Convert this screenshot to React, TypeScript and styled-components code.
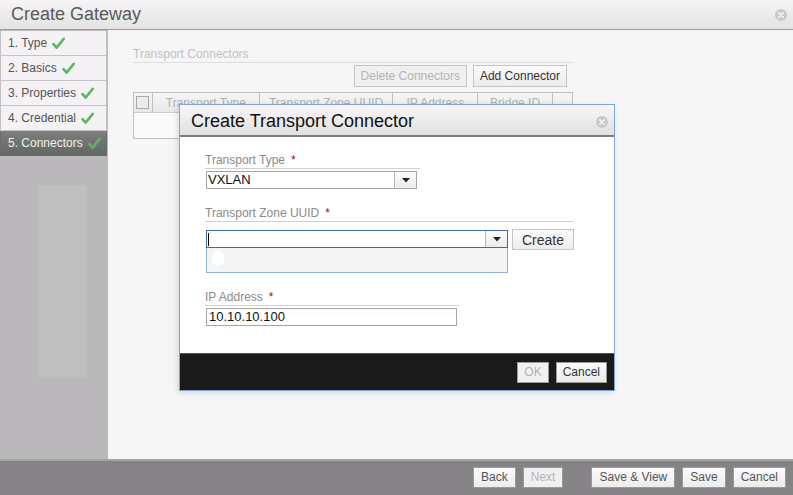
import type { FC, ReactNode } from 'react'
import styled, { createGlobalStyle } from 'styled-components'

const GlobalStyle = createGlobalStyle`
  html, body {
    margin: 0;
    padding: 0;
    background: #f6f6f6;
  }
  body {
    font-family: "Liberation Sans", Arial, sans-serif;
  }
`

const steps = ['1. Type', '2. Basics', '3. Properties', '4. Credential', '5. Connectors']

const columns = [
  { label: 'Transport Type', width: 107 },
  { label: 'Transport Zone UUID', width: 134 },
  { label: 'IP Address', width: 85 },
  { label: 'Bridge ID', width: 75 },
  { label: '', width: 19 },
]

const CheckIcon: FC = () => (
  <svg width="13" height="13" viewBox="0 0 13 13">
    <path d="M1.5 7.2 L4.6 10.6 L11.8 1.8" fill="none" stroke="#5cb65c" strokeWidth="2.6" strokeLinecap="round" strokeLinejoin="round" />
  </svg>
)

const CloseIcon: FC = () => (
  <svg width="12" height="12" viewBox="0 0 12 12">
    <circle cx="6" cy="6" r="6" fill="#c9c9c9" />
    <path d="M3.8 3.8 L8.2 8.2 M8.2 3.8 L3.8 8.2" stroke="#f4f4f4" strokeWidth="1.7" strokeLinecap="round" />
  </svg>
)

const ArrowIcon: FC = () => (
  <svg width="8" height="5" viewBox="0 0 8 5">
    <path d="M0 0 L8 0 L4 4.5 Z" fill="#222" />
  </svg>
)

const Field: FC<{ label: string; width: number; children: ReactNode; top: number }> = ({ label, width, children, top }) => (
  <FieldGroup $top={top}>
    <FieldLabel $width={width}>
      {label}
      <Required>*</Required>
    </FieldLabel>
    {children}
  </FieldGroup>
)

const App: FC = () => {
  return (
    <>
      <GlobalStyle />
      <Frame>
        <TitleBar>
          <Title>Create Gateway</Title>
          <CloseIcon />
        </TitleBar>

        <Middle>
          <Sidebar>
            {steps.map((step, i) => (
              <NavItem key={step} $active={i === steps.length - 1}>
                <span>{step}</span>
                <CheckIcon />
              </NavItem>
            ))}
            <Ghost />
          </Sidebar>

          <Main>
            <SectionTitle>Transport Connectors</SectionTitle>
            <Toolbar>
              <Button $disabled>Delete Connectors</Button>
              <Button>Add Connector</Button>
            </Toolbar>
            <Table>
              <HeaderRow>
                <CheckCell>
                  <Checkbox />
                </CheckCell>
                {columns.map((c, i) => (
                  <HeaderCell key={i} $width={c.width}>
                    {c.label}
                  </HeaderCell>
                ))}
              </HeaderRow>
              <BodyRow />
            </Table>
          </Main>
        </Middle>

        <Footer>
          <Button $size="footer">Back</Button>
          <Button $size="footer" $disabled>
            Next
          </Button>
          <Spacer />
          <Button $size="footer">Save &amp; View</Button>
          <Button $size="footer">Save</Button>
          <Button $size="footer">Cancel</Button>
        </Footer>

        <Dialog>
          <DialogHeader>
            <DialogTitle>Create Transport Connector</DialogTitle>
            <CloseIcon />
          </DialogHeader>
          <DialogBody>
            <Field label="Transport Type" width={215} top={16}>
              <Select $width={211}>
                <SelectValue>VXLAN</SelectValue>
                <SelectArrow>
                  <ArrowIcon />
                </SelectArrow>
              </Select>
            </Field>

            <Field label="Transport Zone UUID" width={368} top={17}>
              <ComboRow>
                <ComboColumn>
                  <Select $width={302} $focused>
                    <SelectValue>
                      <Caret />
                    </SelectValue>
                    <SelectArrow>
                      <ArrowIcon />
                    </SelectArrow>
                  </Select>
                  <DropList>
                    <Blob />
                  </DropList>
                </ComboColumn>
                <Button $size="create">Create</Button>
              </ComboRow>
            </Field>

            <Field label="IP Address" width={254} top={17}>
              <TextInput>10.10.10.100</TextInput>
            </Field>
          </DialogBody>
          <DialogFooter>
            <Button $size="dialog" $disabled>
              OK
            </Button>
            <Button $size="dialog">Cancel</Button>
          </DialogFooter>
        </Dialog>
      </Frame>
    </>
  )
}

const Frame = styled.div`
  position: relative;
  width: 793px;
  height: 495px;
  display: flex;
  flex-direction: column;
  overflow: hidden;
  background: #f6f6f6;
`

const TitleBar = styled.div`
  height: 30px;
  flex-shrink: 0;
  display: flex;
  align-items: center;
  justify-content: space-between;
  padding: 0 6px 0 11px;
  box-sizing: border-box;
  background: linear-gradient(#f7f5f7 0%, #f1eff1 30%, #e8e8e8 70%, #e4e4e4 100%);
  border-bottom: 1px solid #9c9c9c;
`

const Title = styled.div`
  font-size: 18px;
  color: #5a5a5a;
`

const Middle = styled.div`
  flex: 1;
  display: flex;
  min-height: 0;
`

const Sidebar = styled.div`
  width: 108px;
  flex-shrink: 0;
  background: #bab8bb;
  padding-top: 1px;
  box-sizing: border-box;
  display: flex;
  flex-direction: column;
`

const NavItem = styled.div<{ $active?: boolean }>`
  height: 25px;
  width: 107px;
  box-sizing: border-box;
  display: flex;
  align-items: center;
  gap: 5px;
  padding-left: 7px;
  font-size: 12px;
  border: 1px solid ${(p) => (p.$active ? '#6a6c6a' : '#c4c2c4')};
  border-top: none;
  background: ${(p) => (p.$active ? 'linear-gradient(#7c7f7c, #646864)' : '#f4f2f4')};
  color: ${(p) => (p.$active ? '#f0f0f0' : '#555')};
`

const Ghost = styled.div`
  margin: 29px 0 0 39px;
  width: 48px;
  height: 193px;
  background: #c0bfc0;
`

const Main = styled.div`
  flex: 1;
  padding: 0 0 0 25px;
  background: #f6f6f6;
`

const SectionTitle = styled.div`
  width: 440px;
  margin-top: 16px;
  line-height: 16px;
  font-size: 12px;
  color: #c0c0c0;
  border-bottom: 1px solid #dedede;
`

const Toolbar = styled.div`
  width: 434px;
  margin-top: 2px;
  display: flex;
  justify-content: flex-end;
  gap: 6px;
`

const Button = styled.div<{ $disabled?: boolean; $size?: 'footer' | 'dialog' | 'create' }>`
  height: ${(p) => (p.$size ? 21 : 22)}px;
  box-sizing: border-box;
  padding: 0 ${(p) => (p.$size === 'create' ? 9 : p.$size === 'footer' ? 7 : 6)}px;
  display: flex;
  align-items: center;
  justify-content: center;
  font-size: ${(p) => (p.$size === 'create' ? 14 : 12)}px;
  border: 1px solid ${(p) => (p.$size === 'dialog' || p.$size === 'footer' ? '#9a9a9a' : '#c4c4c4')};
  background: ${(p) => (p.$disabled ? '#f0f0f0' : 'linear-gradient(#fbfbfb, #ececec)')};
  color: ${(p) => (p.$disabled ? '#b4b4b4' : p.$size === 'footer' ? '#555' : '#333')};
  white-space: nowrap;
`

const Table = styled.div`
  width: 440px;
  margin-top: 5px;
  border: 1px solid #c0c0c0;
  box-sizing: border-box;
`

const HeaderRow = styled.div`
  display: flex;
  height: 19px;
  background: linear-gradient(#f6f6f6, #e8e8e8);
  border-bottom: 1px solid #cdcdcd;
`

const CheckCell = styled.div`
  width: 18px;
  border-right: 1px solid #c0c0c0;
  display: flex;
  align-items: center;
  justify-content: center;
`

const Checkbox = styled.div`
  width: 11px;
  height: 11px;
  border: 1px solid #a8a8a8;
  background: #ecebe6;
`

const HeaderCell = styled.div<{ $width: number }>`
  width: ${(p) => p.$width}px;
  box-sizing: border-box;
  border-right: 1px solid #c0c0c0;
  font-size: 12px;
  color: #b0b0b0;
  text-align: center;
  line-height: 21px;
  overflow: hidden;
  white-space: nowrap;
  &:last-child {
    border-right: none;
  }
`

const BodyRow = styled.div`
  height: 25px;
  background: #fafafa;
`

const Footer = styled.div`
  height: 36px;
  flex-shrink: 0;
  box-sizing: border-box;
  border-top: 2px solid #a6a5a6;
  background: #858385;
  display: flex;
  align-items: center;
  justify-content: flex-end;
  gap: 7px;
  padding: 0 7px 2px 0;
`

const Spacer = styled.div`
  width: 14px;
`

const Dialog = styled.div`
  position: absolute;
  left: 179px;
  top: 104px;
  width: 436px;
  height: 287px;
  box-sizing: border-box;
  border: 1px solid #7ba9d4;
  background: #fff;
  display: flex;
  flex-direction: column;
  box-shadow: -2px 2px 6px rgba(0, 0, 0, 0.12);
`

const DialogHeader = styled.div`
  height: 32px;
  flex-shrink: 0;
  box-sizing: border-box;
  display: flex;
  align-items: center;
  justify-content: space-between;
  padding: 3px 6px 0 11px;
  background: linear-gradient(#f7f5f7 0%, #f1eff1 35%, #e6e6e6 75%, #e2e2e2 100%);
  border-bottom: 2px solid #7d7d7d;
`

const DialogTitle = styled.div`
  font-size: 18px;
  color: #111;
`

const DialogBody = styled.div`
  flex: 1;
  padding-left: 25px;
  display: flex;
  flex-direction: column;
`

const FieldGroup = styled.div<{ $top: number }>`
  margin-top: ${(p) => p.$top}px;
  display: flex;
  flex-direction: column;
`

const FieldLabel = styled.div<{ $width: number }>`
  width: ${(p) => p.$width}px;
  line-height: 15px;
  font-size: 12px;
  color: #8a8a8a;
  border-bottom: 1px solid #d0d0d0;
  margin-bottom: 2px;
`

const Required = styled.span`
  color: #9a1010;
  margin-left: 6px;
`

const Select = styled.div<{ $width: number; $focused?: boolean }>`
  width: ${(p) => p.$width}px;
  height: 18px;
  margin-left: 1px;
  box-sizing: border-box;
  display: flex;
  border: 1px solid ${(p) => (p.$focused ? '#3d6ba8' : '#a4a4a4')};
  background: #fff;
`

const SelectValue = styled.div`
  flex: 1;
  font-size: 13px;
  line-height: 16px;
  color: #111;
  padding-left: 1px;
  display: flex;
  align-items: center;
`

const Caret = styled.div`
  width: 1px;
  height: 13px;
  background: #000;
`

const SelectArrow = styled.div`
  width: 21px;
  border-left: 1px solid #b8b8b8;
  background: linear-gradient(#fcfcfc, #ececec);
  display: flex;
  align-items: center;
  justify-content: center;
`

const ComboRow = styled.div`
  display: flex;
  align-items: flex-start;
  gap: 4px;
  margin-top: 5px;
`

const ComboColumn = styled.div`
  display: flex;
  flex-direction: column;
  padding-top: 1px;
`

const DropList = styled.div`
  width: 302px;
  height: 25px;
  margin-left: 1px;
  box-sizing: border-box;
  border: 1px solid #8ab4da;
  border-top: none;
  background: #f5f5f5;
  padding: 3px 0 0 5px;
`

const Blob = styled.div`
  width: 12px;
  height: 15px;
  border-radius: 6px;
  background: #fff;
`

const TextInput = styled.div`
  width: 251px;
  height: 18px;
  margin-left: 1px;
  box-sizing: border-box;
  border: 1px solid #a4a4a4;
  background: linear-gradient(#fafafa, #fff 40%);
  font-size: 13px;
  line-height: 16px;
  padding-left: 2px;
  color: #111;
`

const DialogFooter = styled.div`
  height: 37px;
  flex-shrink: 0;
  box-sizing: border-box;
  border-top: 1px solid #555;
  background: #1a1a1a;
  display: flex;
  align-items: center;
  justify-content: flex-end;
  gap: 7px;
  padding: 0 7px 0 0;
`

export default App
